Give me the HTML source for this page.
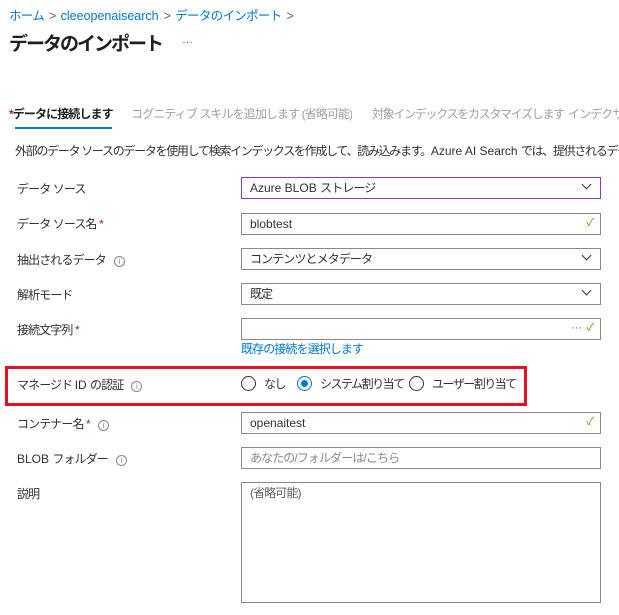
<!DOCTYPE html>
<html><head><meta charset="utf-8"><style>
*{box-sizing:border-box;margin:0;padding:0}
body{width:619px;height:615px;background:#fff;font-family:"Segoe UI","Liberation Sans","Noto Sans CJK JP",sans-serif;color:#323130;position:relative;overflow:hidden;font-size:12px;letter-spacing:-0.9px}
.a{position:absolute;white-space:nowrap}
.l{letter-spacing:0}
.bc{top:5px;left:9px;font-size:12.5px;color:#0078d4;letter-spacing:-0.7px}
.bc span{color:#605e5c;margin:0 5px}
.title{top:29px;left:9px;font-size:19px;font-weight:bold;color:#201f1e;letter-spacing:-2px}
.dots{top:34px;left:182px;font-size:11px;color:#605e5c;letter-spacing:0}
.tab{top:105px;font-size:12px;color:#a19f9d;overflow:hidden}
.ul{top:127px;left:15px;width:97px;height:2px;background:#0078d4}
.desc{top:142px;left:15px;width:604px;overflow:hidden;font-size:12px;color:#323130;letter-spacing:-1.3px}
.lbl{left:17px;font-size:12px}
.req{color:#a4262c}
.info{display:inline-block;width:11px;height:11px;border:1px solid #8a8886;border-radius:50%;font-size:8px;line-height:9px;text-align:center;color:#8a8886;margin-left:8px;vertical-align:0;letter-spacing:0}
.in{left:241px;width:360px;height:22px;border:1px solid #8a8886;padding:2px 8px;font-size:12px;line-height:16px}
.chev{position:absolute;right:10px;top:3px;width:7px;height:7px;border-right:1.2px solid #323130;border-bottom:1.2px solid #323130;transform:rotate(45deg)}
.ck{position:absolute;right:6px;top:1px;color:#57a300;font-size:11px;letter-spacing:0}
.red{left:5px;top:366px;width:522px;height:40px;border:3px solid #e81123}
.rad{position:absolute;top:376px;width:15px;height:15px;border:1px solid #323130;border-radius:50%}
.rad.on{border-color:#0078d4}
.rad.on:after{content:"";position:absolute;left:3px;top:3px;width:7px;height:7px;border-radius:50%;background:#0078d4}
.rt{top:375px;font-size:12px;letter-spacing:-1.5px}
</style></head><body>
<div class="a bc">ホーム<span>&gt;</span><b class="l" style="font-weight:normal">cleeopenaisearch</b><span>&gt;</span>データのインポート<span>&gt;</span></div>
<div class="a title">データのインポート</div>
<div class="a dots">…</div>
<div class="a tab" style="left:9px;color:#201f1e;font-weight:bold"><span style="color:#a4262c">*</span>データに接続します</div>
<div class="a tab" style="left:131px">コグニティブ スキルを追加します (省略可能)</div>
<div class="a tab" style="left:372px;letter-spacing:-1.3px">対象インデックスをカスタマイズします</div>
<div class="a tab" style="left:568px;width:51px">インデクサー</div>
<div class="a ul"></div>
<div class="a desc">外部のデータ ソースのデータを使用して検索インデックスを作成して、読み込みます。<span class="l">Azure AI Search </span>では、提供されるデータ構造</div>

<div class="a lbl" style="top:180px">データ ソース</div>
<div class="a in" style="top:177px;border-color:#8a3ab9"><span class="l">Azure BLOB </span>ストレージ<i class="chev"></i></div>
<div class="a lbl" style="top:215px">データ ソース名 <span class="req">*</span></div>
<div class="a in l" style="top:213px">blobtest<span class="ck">✓</span></div>
<div class="a lbl" style="top:251px">抽出されるデータ<span class="info">i</span></div>
<div class="a in" style="top:248px">コンテンツとメタデータ<i class="chev"></i></div>
<div class="a lbl" style="top:286px">解析モード</div>
<div class="a in" style="top:283px">既定<i class="chev"></i></div>
<div class="a lbl" style="top:321px">接続文字列 <span class="req">*</span></div>
<div class="a in" style="top:318px"><span class="ck" style="right:18px;color:#605e5c">···</span><span class="ck">✓</span></div>
<div class="a" style="top:340px;left:241px;color:#0078d4;font-size:12px">既存の接続を選択します</div>

<div class="a red"></div>
<div class="a lbl" style="top:376px">マネージド <span class="l">ID </span>の認証<span class="info">i</span></div>
<span class="a rad" style="left:241px"></span><div class="a rt" style="left:264px">なし</div>
<span class="a rad on" style="left:297px"></span><div class="a rt" style="left:320px">システム割り当て</div>
<span class="a rad" style="left:409px"></span><div class="a rt" style="left:432px">ユーザー割り当て</div>

<div class="a lbl" style="top:415px">コンテナー名 <span class="req">*</span><span class="info">i</span></div>
<div class="a in l" style="top:412px">openaitest<span class="ck">✓</span></div>
<div class="a lbl" style="top:450px"><span class="l">BLOB </span>フォルダー<span class="info">i</span></div>
<div class="a in" style="top:447px;color:#8a8886">あなたの/フォルダーは/こちら</div>
<div class="a lbl" style="top:485px">説明</div>
<div class="a in" style="top:482px;height:121px;color:#605e5c">(省略可能)</div>
</body></html>
